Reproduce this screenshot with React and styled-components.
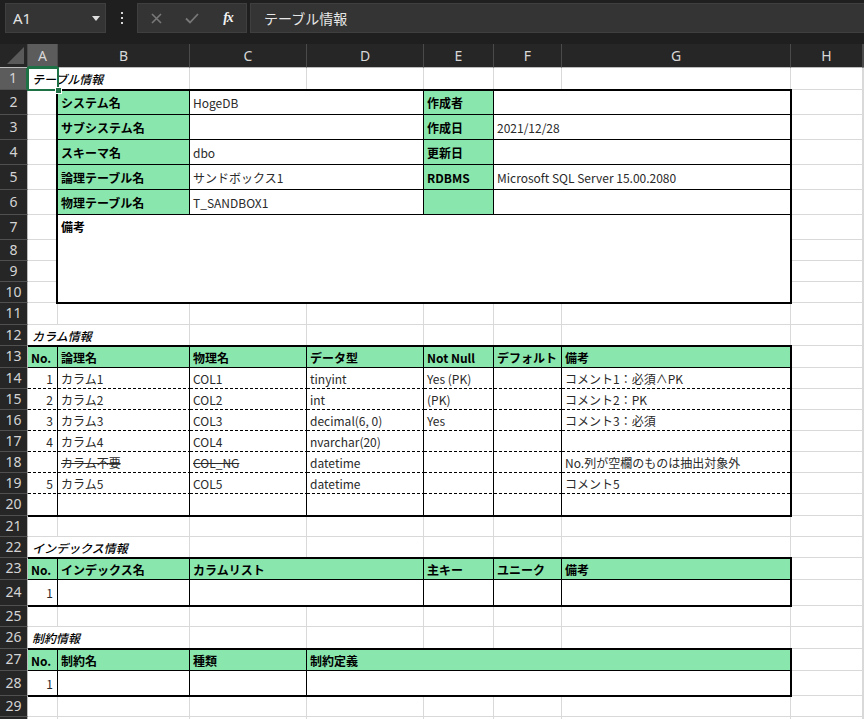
import React from "react";
import styled, { createGlobalStyle, css } from "styled-components";

const UI_FONT = `"Segoe UI", "Noto Sans", "Noto Sans CJK JP", sans-serif`;
const CELL_FONT = `"Noto Sans CJK JP", "Noto Sans", sans-serif`;
const GREEN_FILL = "#89e6ad";
const SEL_GREEN = "#1e7145";
const GRID = "#d9d9d9";

const colW = [30, 132, 117, 117, 70, 68, 229, 72]; // A..H
const rowH = [22, 25, 25, 25, 25, 25, 25, 21, 21, 21, 22, 21, 22, 21, 21, 21, 21, 21, 21, 22, 21, 21, 22, 26, 21, 22, 22, 25, 21, 21];
const letters = ["A", "B", "C", "D", "E", "F", "G", "H", ""];

const GlobalStyle = createGlobalStyle`
  html, body { margin: 0; padding: 0; background: #1f1f1f; overflow: hidden; }
  #root { width: 864px; height: 719px; }
`;

const Window = styled.div`
  width: 864px;
  height: 719px;
  overflow: hidden;
  display: flex;
  flex-direction: column;
  background: #1f1f1f;
`;

const FormulaBar = styled.div`
  flex: none;
  height: 44px;
  box-sizing: border-box;
  padding: 3px 0 0 5px;
  display: flex;
  align-items: flex-start;
  background: #1f1f1f;
`;

const Box = styled.div`
  height: 30px;
  box-sizing: border-box;
  background: #343434;
  border: 1px solid #3f3f3f;
  display: flex;
  align-items: center;
`;

const NameBox = styled(Box)`
  width: 101px;
  justify-content: space-between;
  padding: 0 5px 0 7px;
  color: #e3e3e3;
  font: 15px ${UI_FONT};
`;

const Caret = styled.span`
  width: 0;
  height: 0;
  border-left: 4px solid transparent;
  border-right: 4px solid transparent;
  border-top: 5px solid #dedede;
`;

const Kebab = styled.div`
  width: 31px;
  height: 30px;
  display: flex;
  flex-direction: column;
  align-items: center;
  justify-content: center;
  gap: 3px;
`;

const Dot = styled.span`
  width: 2px;
  height: 2px;
  background: #d6d6d6;
`;

const FuncBox = styled(Box)`
  width: 110px;
`;

const FuncSlot = styled.div`
  width: 36px;
  height: 28px;
  display: flex;
  align-items: center;
  justify-content: center;
  color: #f2f2f2;
  font: italic bold 14px "Liberation Serif", serif;
  letter-spacing: -1px;
`;

const FormulaInput = styled(Box)`
  flex: 1;
  margin-left: 3px;
  border-right: none;
  padding-left: 13px;
  color: #e6e6e6;
  font: 14px ${CELL_FONT};
`;

const Sheet = styled.div`
  flex: 1;
  display: grid;
  grid-template-columns: 28px ${colW.map((w) => w + "px").join(" ")} 1fr;
  grid-template-rows: 24px ${rowH.map((h) => h + "px").join(" ")};
  background: #fff;
  font: 12px ${CELL_FONT};
  overflow: hidden;
`;

const Corner = styled.div`
  grid-row: 1;
  grid-column: 1;
  background: #262626;
  border-bottom: 1px solid #bdbdbd;
  border-right: 1px solid #4a4a4a;
  display: flex;
  align-items: flex-end;
  justify-content: flex-end;
  padding: 0 3px 3px 0;
`;

const ColHead = styled.div`
  grid-row: 1;
  grid-column: ${(p) => p.$c};
  background: ${(p) => (p.$active ? "#5c5c5c" : "#262626")};
  border-right: 1px solid #4a4a4a;
  border-bottom: ${(p) => (p.$active ? `2px solid ${SEL_GREEN}` : "1px solid #bdbdbd")};
  color: #d8d8d8;
  font: 14px ${UI_FONT};
  display: flex;
  align-items: center;
  justify-content: center;
  overflow: hidden;
`;

const RowHead = styled.div`
  grid-row: ${(p) => p.$r + 1};
  grid-column: 1;
  background: ${(p) => (p.$active ? "#5c5c5c" : "#262626")};
  border-bottom: 1px solid #505050;
  border-right: ${(p) => (p.$active ? `2px solid ${SEL_GREEN}` : "1px solid #bdbdbd")};
  color: #d4d4d4;
  font: 14px ${UI_FONT};
  display: flex;
  align-items: center;
  justify-content: center;
  padding-bottom: 2px;
  box-sizing: border-box;
`;

const GridCell = styled.div`
  grid-row: ${(p) => p.$r + 1};
  grid-column: ${(p) => p.$c};
  border-right: 1px solid ${GRID};
  border-bottom: 1px solid ${GRID};
`;

const SectionTitle = styled.div`
  grid-row: ${(p) => p.$r + 1};
  grid-column: 2 / span 2;
  background: #fff;
  border-right: 1px solid ${GRID};
  border-bottom: 1px solid ${GRID};
  display: flex;
  align-items: center;
  padding-left: 4px;
  font-style: italic;
  font-weight: 500;
  color: #000;
  white-space: nowrap;
  z-index: 1;
`;

const TableFrame = styled.div`
  grid-row: ${(p) => p.$row + 1} / span ${(p) => p.$rows};
  grid-column: ${(p) => p.$col + 1} / span ${(p) => p.$cols};
  margin: -1px -1px -1px ${(p) => (p.$edge ? 0 : -2)}px;
  border: 2px solid #000;
  border-left-width: ${(p) => (p.$edge ? 0 : 2)}px;
  display: grid;
  grid-template-columns: ${(p) => p.$colTpl};
  grid-template-rows: ${(p) => p.$rowTpl};
  background: #fff;
  z-index: 2;
`;

const dashedBottom = css`
  background-image: repeating-linear-gradient(90deg, #000 0 3px, transparent 3px 5px);
  background-size: 100% 1px;
  background-position: left bottom;
  background-repeat: no-repeat;
`;

const TCell = styled.div`
  grid-row: ${(p) => p.$r} / span ${(p) => p.$rs};
  grid-column: ${(p) => p.$c} / span ${(p) => p.$cs};
  min-width: 0;
  box-sizing: border-box;
  border-right: ${(p) => (p.$noRight ? "none" : "1px solid #000")};
  border-bottom: ${(p) => (p.$noBottom || p.$dashed ? "none" : "1px solid #000")};
  ${(p) => p.$dashed && !p.$noBottom && dashedBottom};
  background-color: ${(p) => (p.$head ? GREEN_FILL : "#fff")};
  display: flex;
  align-items: ${(p) => (p.$top ? "flex-start" : "center")};
  justify-content: ${(p) => (p.$right ? "flex-end" : "flex-start")};
  padding: 0 ${(p) => (p.$right ? 4 : 3)}px 0 3px;
  line-height: ${(p) => (p.$top ? "24px" : "normal")};
  font-weight: ${(p) => (p.$head ? 700 : 400)};
  color: ${(p) => (p.$head ? "#000" : "#2a2a2a")};
  text-decoration: ${(p) => (p.$strike ? "line-through" : "none")};
  white-space: nowrap;
  overflow: hidden;
`;

const RemarkLabel = styled.span`
  font-weight: 700;
  color: #000;
`;

const SelectionBox = styled.div`
  grid-row: 2;
  grid-column: 2;
  margin: -1px;
  border: 2px solid ${SEL_GREEN};
  position: relative;
  z-index: 4;
  pointer-events: none;
`;

const Handle = styled.span`
  position: absolute;
  right: -5px;
  bottom: -5px;
  width: 5px;
  height: 5px;
  background: ${SEL_GREEN};
  border: 1px solid #fff;
`;

function SheetTable({ row, col, rows, cols, data }) {
  const occupied = {};
  const placed = [];
  data.forEach((cells, ri) => {
    let ci = 0;
    cells.forEach((cell) => {
      while (occupied[`${ri},${ci}`]) ci++;
      const cs = cell.cs || 1;
      const rs = cell.rs || 1;
      for (let a = 0; a < rs; a++)
        for (let b = 0; b < cs; b++) occupied[`${ri + a},${ci + b}`] = true;
      placed.push({ ...cell, r: ri + 1, c: ci + 1, rs, cs, key: `${ri}-${ci}` });
      ci += cs;
    });
  });
  const edge = col === 1;
  const cw = colW.slice(col - 1, col - 1 + cols);
  cw[cw.length - 1] -= 1;
  const rh = rowH.slice(row - 1, row - 1 + rows);
  rh[0] -= 1;
  rh[rh.length - 1] -= 1;
  return (
    <TableFrame
      $row={row}
      $rows={rows}
      $col={col}
      $cols={cols}
      $edge={edge}
      $colTpl={cw.map((w) => w + "px").join(" ")}
      $rowTpl={rh.map((h) => h + "px").join(" ")}
    >
      {placed.map((p) => (
        <TCell
          key={p.key}
          $r={p.r}
          $c={p.c}
          $rs={p.rs}
          $cs={p.cs}
          $head={p.head}
          $right={p.right}
          $top={p.top}
          $strike={p.strike}
          $dashed={p.dashed}
          $noRight={p.c + p.cs - 1 === cols}
          $noBottom={p.r + p.rs - 1 === rows}
        >
          {p.label ? <RemarkLabel>{p.t}</RemarkLabel> : p.t}
        </TCell>
      ))}
    </TableFrame>
  );
}

const H = (t, extra = {}) => ({ t, head: true, ...extra });
const V = (t, extra = {}) => ({ t, ...extra });

const infoTable = [
  [H("システム名"), V("HogeDB", { cs: 2 }), H("作成者"), V("", { cs: 2 })],
  [H("サブシステム名"), V("", { cs: 2 }), H("作成日"), V("2021/12/28", { cs: 2 })],
  [H("スキーマ名"), V("dbo", { cs: 2 }), H("更新日"), V("", { cs: 2 })],
  [H("論理テーブル名"), V("サンドボックス1", { cs: 2 }), H("RDBMS"), V("Microsoft SQL Server 15.00.2080", { cs: 2 })],
  [H("物理テーブル名"), V("T_SANDBOX1", { cs: 2 }), H(""), V("", { cs: 2 })],
  [V("備考", { cs: 6, rs: 4, top: true, label: true })],
  [],
  [],
  [],
];

const colRows = [
  ["1", "カラム1", "COL1", "tinyint", "Yes (PK)", "", "コメント1：必須∧PK"],
  ["2", "カラム2", "COL2", "int", "(PK)", "", "コメント2：PK"],
  ["3", "カラム3", "COL3", "decimal(6, 0)", "Yes", "", "コメント3：必須"],
  ["4", "カラム4", "COL4", "nvarchar(20)", "", "", ""],
  ["", "カラム不要", "COL_NG", "datetime", "", "", "No.列が空欄のものは抽出対象外"],
  ["5", "カラム5", "COL5", "datetime", "", "", "コメント5"],
  ["", "", "", "", "", "", ""],
];

const columnTable = [
  ["No.", "論理名", "物理名", "データ型", "Not Null", "デフォルト", "備考"].map((t) => H(t)),
  ...colRows.map((r, i) =>
    r.map((t, ci) =>
      V(t, {
        right: ci === 0,
        dashed: true,
        strike: i === 4 && (ci === 1 || ci === 2),
      })
    )
  ),
];

const indexTable = [
  [H("No."), H("インデックス名"), H("カラムリスト", { cs: 2 }), H("主キー"), H("ユニーク"), H("備考")],
  [V("1", { right: true }), V(""), V("", { cs: 2 }), V(""), V(""), V("")],
];

const constraintTable = [
  [H("No."), H("制約名"), H("種類"), H("制約定義", { cs: 4 })],
  [V("1", { right: true }), V(""), V(""), V("", { cs: 4 })],
];

const titles = [
  [1, "テーブル情報"],
  [12, "カラム情報"],
  [22, "インデックス情報"],
  [26, "制約情報"],
];

export default function App() {
  const gridCells = [];
  rowH.forEach((_, ri) => {
    for (let c = 2; c <= 10; c++) gridCells.push(<GridCell key={`g${ri}-${c}`} $r={ri + 1} $c={c} />);
  });

  return (
    <Window>
      <GlobalStyle />
      <FormulaBar>
        <NameBox>
          <span>A1</span>
          <Caret />
        </NameBox>
        <Kebab>
          <Dot />
          <Dot />
          <Dot />
        </Kebab>
        <FuncBox>
          <FuncSlot>
            <svg width="11" height="11" viewBox="0 0 11 11">
              <path d="M1 1 L10 10 M10 1 L1 10" stroke="#787878" strokeWidth="1.6" fill="none" />
            </svg>
          </FuncSlot>
          <FuncSlot>
            <svg width="14" height="11" viewBox="0 0 14 11">
              <path d="M1 5.5 L5 9.5 L13 1" stroke="#787878" strokeWidth="1.8" fill="none" />
            </svg>
          </FuncSlot>
          <FuncSlot>fx</FuncSlot>
        </FuncBox>
        <FormulaInput>テーブル情報</FormulaInput>
      </FormulaBar>

      <Sheet>
        <Corner>
          <svg width="17" height="17" viewBox="0 0 17 17">
            <path d="M17 0 L17 17 L0 17 Z" fill="#5a5a5a" />
          </svg>
        </Corner>
        {letters.map((l, i) => (
          <ColHead key={`c${i}`} $c={i + 2} $active={l === "A"}>
            {l}
          </ColHead>
        ))}
        {rowH.map((_, ri) => (
          <RowHead key={`r${ri}`} $r={ri + 1} $active={ri === 0}>
            {ri < 29 ? ri + 1 : ""}
          </RowHead>
        ))}
        {gridCells}
        {titles.map(([r, t]) => (
          <SectionTitle key={`t${r}`} $r={r}>
            {t}
          </SectionTitle>
        ))}
        <SheetTable row={2} rows={9} col={2} cols={6} data={infoTable} />
        <SheetTable row={13} rows={8} col={1} cols={7} data={columnTable} />
        <SheetTable row={23} rows={2} col={1} cols={7} data={indexTable} />
        <SheetTable row={27} rows={2} col={1} cols={7} data={constraintTable} />
        <SelectionBox>
          <Handle />
        </SelectionBox>
      </Sheet>
    </Window>
  );
}
